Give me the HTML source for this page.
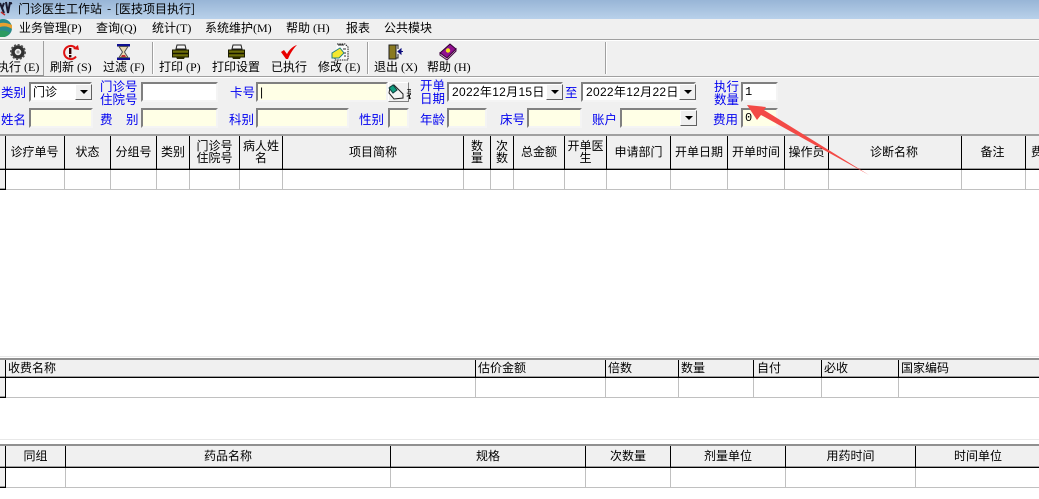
<!DOCTYPE html>
<html><head><meta charset="utf-8">
<style>
html,body{margin:0;padding:0;width:1039px;height:499px;overflow:hidden;background:#fff}
body{position:relative;font:12px/14px "WenQuanYi Zen Hei","Noto Sans CJK SC",sans-serif;color:#000}
div,span{position:absolute;white-space:nowrap}
svg{position:absolute;overflow:visible}
.b{background:#f0f0f0}
.m{top:21px;font-family:"Liberation Serif","WenQuanYi Zen Hei",sans-serif}
.t{top:60px;font-size:12px;line-height:14px;font-family:"Liberation Serif","WenQuanYi Zen Hei",sans-serif}
.sep{top:42px;width:1px;height:32px;background:#a0a0a0;border-right:1px solid #fff}
.l{color:#0000f0;font-size:12.5px;line-height:13px}
.i{box-sizing:border-box;height:20px;border:2px solid;border-color:#808080 #f4f4f4 #f4f4f4 #808080;background:#ffffe6;font:12px/16px "Liberation Sans",sans-serif;padding-left:2px}
.w{background:#fff}
.dd{box-sizing:border-box;width:17px;height:16px;background:#f0f0f0;border:1px solid;border-color:#fff #606060 #606060 #fff}
.dd:after{content:"";position:absolute;left:4px;top:5px;border:4px solid transparent;border-top:4px solid #000;border-bottom:0}
.h{background:#f0f0f0}
.v{width:1px;background:#000}
.g{width:1px;background:#c0c0c0}
.c{text-align:center;line-height:12px}
</style></head><body>
<!-- title -->
<div style="left:0;top:0;width:1039px;height:19px;background:linear-gradient(#98b5d6,#b9d1ea)"></div>
<svg style="left:0;top:0" width="14" height="16"><path d="M0 3L4 13M4 3L2 8M6 2L8 13L10 2M9 4L12 3" stroke="#1a1a30" stroke-width="2" fill="none"/><path d="M1 12L5 15" stroke="#c03030" stroke-width="1.5"/></svg>
<div style="left:18px;top:2px">门诊医生工作站</div>
<div style="left:107px;top:2px">-</div>
<div style="left:115px;top:2px">[医技项目执行]</div>
<!-- menu -->
<div class="b" style="left:0;top:19px;width:1039px;height:20px"></div>
<svg style="left:0;top:19px" width="13" height="19"><circle cx="3" cy="9" r="9" fill="#2a8a8a"/><path d="M-4 6C2 2 8 4 12 6L12 10C8 7 2 6 -4 10Z" fill="#e8a030"/><path d="M-4 13C2 10 7 12 10 14L5 18L-4 18Z" fill="#2c9a60"/></svg>
<div class="m" style="left:19px">业务管理(P)</div>
<div class="m" style="left:96px">查询(Q)</div>
<div class="m" style="left:152px">统计(T)</div>
<div class="m" style="left:205px">系统维护(M)</div>
<div class="m" style="left:286px">帮助 (H)</div>
<div class="m" style="left:346px">报表</div>
<div class="m" style="left:384px">公共模块</div>
<!-- toolbar -->
<div class="b" style="left:0;top:39px;width:1039px;height:96px"></div>
<div style="left:0;top:39px;width:1039px;height:1px;background:#a0a0a0"></div>
<div style="left:0;top:40px;width:1039px;height:1px;background:#fff"></div>
<div style="left:0;top:76px;width:1039px;height:1px;background:#a0a0a0"></div>
<div style="left:0;top:77px;width:1039px;height:1px;background:#fff"></div>
<div style="left:43px;top:41px;width:1px;height:34px;background:#a0a0a0"></div>
<div style="left:0;top:75px;width:44px;height:1px;background:#909090"></div>
<div class="sep" style="left:152px"></div>
<div class="sep" style="left:367px"></div>
<div class="sep" style="left:605px"></div>
<!-- gear -->
<svg style="left:10px;top:44px" width="16" height="16"><circle cx="8" cy="8" r="5" fill="none" stroke="#303030" stroke-width="3.5"/><circle cx="8" cy="8" r="7" fill="none" stroke="#505050" stroke-width="2" stroke-dasharray="2 1.6"/><circle cx="8" cy="8" r="1.6" fill="#a0a0a0"/></svg>
<!-- refresh -->
<svg style="left:62px;top:44px" width="18" height="17"><path d="M14 12.5A6.6 6.6 0 1 1 13 3.5" fill="none" stroke="#e01010" stroke-width="2"/><path d="M11 5L17 6L16 1Z" fill="#e01010"/><rect x="7" y="4" width="2.4" height="6" fill="#300"/><rect x="7" y="11" width="2.4" height="2.4" fill="#300"/></svg>
<!-- hourglass -->
<svg style="left:116px;top:44px" width="15" height="16"><rect x="1" y="0" width="13" height="2.5" fill="#101090"/><rect x="1" y="13.5" width="13" height="2.5" fill="#101090"/><path d="M3 2.5H12L8.5 8L12 13.5H3L6.5 8Z" fill="#e8d8b0" stroke="#505050"/><path d="M6 11H9L10 13H5Z" fill="#c03030"/></svg>
<!-- printers -->
<svg style="left:172px;top:44px" width="17" height="16"><path d="M5 1H13L14 5H4Z" fill="#f4f4f4" stroke="#202020"/><path d="M0.500 6H16.500V13H0.500Z" fill="#6e6e08" stroke="#181800"/><path d="M1 9.500H16" stroke="#181800" stroke-width="1.500"/><path d="M4 13H13L12 15H5Z" fill="#282800"/></svg>
<svg style="left:228px;top:44px" width="17" height="16"><path d="M5 1H13L14 5H4Z" fill="#f4f4f4" stroke="#202020"/><path d="M0.500 6H16.500V13H0.500Z" fill="#6e6e08" stroke="#181800"/><path d="M1 9.500H16" stroke="#181800" stroke-width="1.500"/><path d="M4 13H13L12 15H5Z" fill="#282800"/></svg>
<!-- check -->
<svg style="left:280px;top:44px" width="18" height="16"><path d="M1 8L4 6L7 10C9 6 13 2 17 1C13 5 10 10 8 15H6Z" fill="#e80000"/></svg>
<!-- edit -->
<svg style="left:331px;top:43px" width="18" height="18"><path d="M6 1H14L17 4V17H4V10" fill="#fafafa" stroke="#202020" stroke-dasharray="1.5 .8"/><path d="M1 10L9 5L13 10L8 15H1Z" fill="#f4e830" stroke="#208080"/><path d="M7 2H13M12 6H15M13 10H15M13 13H15" stroke="#303030"/></svg>
<!-- exit -->
<svg style="left:388px;top:44px" width="16" height="16"><path d="M1 1H8V15H1Z" fill="#8a7a20" stroke="#202020"/><path d="M8 1H10V5M10 10V14H8" stroke="#202020" fill="none"/><path d="M10 7.5H15M13 5V10L10 7.5Z" stroke="#101080" fill="#101080"/></svg>
<!-- help -->
<svg style="left:439px;top:43px" width="18" height="18"><path d="M1 10L11 1L17 6L8 15Z" fill="#901090" stroke="#300030"/><path d="M1 10V12L8 17L17 8V6L8 15Z" fill="#f0e8e0" stroke="#400040"/><circle cx="9" cy="7.500" r="2.200" fill="#f0e020"/></svg>
<div class="t" style="left:-3px">执行 (E)</div>
<div class="t" style="left:50px">刷新 (S)</div>
<div class="t" style="left:103px">过滤 (F)</div>
<div class="t" style="left:159px">打印 (P)</div>
<div class="t" style="left:212px">打印设置</div>
<div class="t" style="left:271px">已执行</div>
<div class="t" style="left:318px">修改 (E)</div>
<div class="t" style="left:374px">退出 (X)</div>
<div class="t" style="left:427px">帮助 (H)</div>
<!-- filter labels -->
<div class="l" style="left:1px;top:85px">类别</div>
<div class="l" style="left:100px;top:79px">门诊号<br>住院号</div>
<div class="l" style="left:230px;top:85px">卡号</div>
<div class="l" style="left:420px;top:78px">开单<br>日期</div>
<div class="l" style="left:565px;top:85px">至</div>
<div class="l" style="left:714px;top:79px">执行<br>数量</div>
<div class="l" style="left:1px;top:112px">姓名</div>
<div class="l" style="left:100px;top:112px">费</div>
<div class="l" style="left:126px;top:112px">别</div>
<div class="l" style="left:229px;top:112px">科别</div>
<div class="l" style="left:359px;top:112px">性别</div>
<div class="l" style="left:420px;top:112px">年龄</div>
<div class="l" style="left:500px;top:112px">床号</div>
<div class="l" style="left:592px;top:112px">账户</div>
<div class="l" style="left:713px;top:112px">费用</div>
<!-- row 1 inputs -->
<div class="i w" style="left:29px;top:82px;width:63px;font-family:'WenQuanYi Zen Hei',sans-serif">门诊<div class="dd" style="left:44px;top:0"></div></div>
<div class="i w" style="left:141px;top:82px;width:77px"></div>
<div class="i" style="left:256px;top:82px;width:132px">|</div>
<div style="left:388px;top:82px;width:21px;height:20px;box-sizing:border-box;background:#f0f0f0;border:1px solid;border-color:#fff #808080 #808080 #fff"></div>
<svg style="left:388px;top:84px" width="17" height="17"><path d="M2 3L6 1L15 10L15 14L6 15L1 9Z" fill="#f4f4f4" stroke="#202020"/><path d="M1 4L5 1L9 6L5 9Z" fill="#10a080" stroke="#104040"/></svg>
<div style="left:406px;top:87px;width:5px;height:15px;overflow:hidden;font-size:12px">表</div>
<div class="i w" style="left:447px;top:82px;width:116px;padding-left:3px;letter-spacing:.3px;font-family:'Liberation Sans','WenQuanYi Zen Hei',sans-serif">2022年12月15日<div class="dd" style="left:97px;top:0"></div></div>
<div class="i w" style="left:581px;top:82px;width:115px;padding-left:3px;letter-spacing:.3px;font-family:'Liberation Sans','WenQuanYi Zen Hei',sans-serif">2022年12月22日<div class="dd" style="left:96px;top:0"></div></div>
<div class="i w" style="left:741px;top:82px;width:37px;font-family:'Liberation Mono',monospace">1</div>
<!-- row 2 inputs -->
<div class="i" style="left:29px;top:108px;width:64px"></div>
<div class="i" style="left:141px;top:108px;width:77px"></div>
<div class="i" style="left:256px;top:108px;width:93px"></div>
<div class="i" style="left:388px;top:108px;width:21px"></div>
<div class="i" style="left:447px;top:108px;width:40px"></div>
<div class="i" style="left:527px;top:108px;width:55px"></div>
<div class="i" style="left:620px;top:108px;width:77px"><div class="dd" style="left:58px;top:0"></div></div>
<div class="i" style="left:741px;top:108px;width:37px;font-family:'Liberation Mono',monospace">0</div>

<!-- grid 1 -->
<div style="left:0;top:134px;width:1039px;height:2px;background:#a0a0a0"></div>
<div class="h" style="left:0;top:136px;width:1039px;height:33px"></div>
<div style="left:0;top:168px;width:1039px;height:1px;background:#a0a0a0"></div>
<div style="left:0;top:169px;width:1039px;height:1px;background:#000"></div>
<div class="h" style="left:0;top:170px;width:5px;height:18px;border-bottom:1px solid #a0a0a0"></div>
<div style="left:0;top:189px;width:6px;height:1px;background:#000"></div>
<div style="left:6px;top:189px;width:1033px;height:1px;background:#c0c0c0"></div>
<div class="v" style="left:5px;top:136px;height:54px"></div>
<div class="v" style="left:64px;top:136px;height:34px"></div><div class="g" style="left:64px;top:170px;height:19px"></div>
<div class="v" style="left:110px;top:136px;height:34px"></div><div class="g" style="left:110px;top:170px;height:19px"></div>
<div class="v" style="left:156px;top:136px;height:34px"></div><div class="g" style="left:156px;top:170px;height:19px"></div>
<div class="v" style="left:189px;top:136px;height:34px"></div><div class="g" style="left:189px;top:170px;height:19px"></div>
<div class="v" style="left:239px;top:136px;height:34px"></div><div class="g" style="left:239px;top:170px;height:19px"></div>
<div class="v" style="left:282px;top:136px;height:34px"></div><div class="g" style="left:282px;top:170px;height:19px"></div>
<div class="v" style="left:463px;top:136px;height:34px"></div><div class="g" style="left:463px;top:170px;height:19px"></div>
<div class="v" style="left:490px;top:136px;height:34px"></div><div class="g" style="left:490px;top:170px;height:19px"></div>
<div class="v" style="left:513px;top:136px;height:34px"></div><div class="g" style="left:513px;top:170px;height:19px"></div>
<div class="v" style="left:564px;top:136px;height:34px"></div><div class="g" style="left:564px;top:170px;height:19px"></div>
<div class="v" style="left:606px;top:136px;height:34px"></div><div class="g" style="left:606px;top:170px;height:19px"></div>
<div class="v" style="left:670px;top:136px;height:34px"></div><div class="g" style="left:670px;top:170px;height:19px"></div>
<div class="v" style="left:727px;top:136px;height:34px"></div><div class="g" style="left:727px;top:170px;height:19px"></div>
<div class="v" style="left:784px;top:136px;height:34px"></div><div class="g" style="left:784px;top:170px;height:19px"></div>
<div class="v" style="left:828px;top:136px;height:34px"></div><div class="g" style="left:828px;top:170px;height:19px"></div>
<div class="v" style="left:961px;top:136px;height:34px"></div><div class="g" style="left:961px;top:170px;height:19px"></div>
<div class="v" style="left:1025px;top:136px;height:34px"></div><div class="g" style="left:1025px;top:170px;height:19px"></div>
<div class="c" style="left:5px;top:146px;width:59px">诊疗单号</div>
<div class="c" style="left:65px;top:146px;width:45px">状态</div>
<div class="c" style="left:111px;top:146px;width:45px">分组号</div>
<div class="c" style="left:157px;top:146px;width:32px">类别</div>
<div class="c" style="left:190px;top:140px;width:49px">门诊号<br>住院号</div>
<div class="c" style="left:240px;top:140px;width:42px;white-space:normal">病人姓<br>名</div>
<div class="c" style="left:283px;top:146px;width:180px">项目简称</div>
<div class="c" style="left:464px;top:140px;width:26px">数<br>量</div>
<div class="c" style="left:491px;top:140px;width:22px">次<br>数</div>
<div class="c" style="left:514px;top:146px;width:50px">总金额</div>
<div class="c" style="left:565px;top:140px;width:41px">开单医<br>生</div>
<div class="c" style="left:607px;top:146px;width:63px">申请部门</div>
<div class="c" style="left:671px;top:146px;width:56px">开单日期</div>
<div class="c" style="left:728px;top:146px;width:56px">开单时间</div>
<div class="c" style="left:785px;top:146px;width:43px">操作员</div>
<div class="c" style="left:828px;top:146px;width:132px">诊断名称</div>
<div class="c" style="left:961px;top:146px;width:63px">备注</div>
<div style="left:1031px;top:146px;line-height:12px">费</div>

<!-- grid 2 -->
<div style="left:0;top:356px;width:1039px;height:1px;background:#e8e8e8"></div>
<div style="left:0;top:358px;width:1039px;height:2px;background:#909090"></div>
<div class="h" style="left:0;top:360px;width:1039px;height:16px"></div>
<div style="left:0;top:376px;width:1039px;height:1px;background:#a0a0a0"></div>
<div style="left:0;top:377px;width:1039px;height:1px;background:#000"></div>
<div class="h" style="left:0;top:378px;width:5px;height:18px;border-bottom:1px solid #a0a0a0"></div>
<div style="left:0;top:397px;width:6px;height:1px;background:#000"></div>
<div style="left:6px;top:397px;width:1033px;height:1px;background:#c0c0c0"></div>
<div class="v" style="left:5px;top:360px;height:38px"></div>
<div class="v" style="left:475px;top:360px;height:18px"></div><div class="g" style="left:475px;top:378px;height:19px"></div>
<div class="v" style="left:605px;top:360px;height:18px"></div><div class="g" style="left:605px;top:378px;height:19px"></div>
<div class="v" style="left:678px;top:360px;height:18px"></div><div class="g" style="left:678px;top:378px;height:19px"></div>
<div class="v" style="left:753px;top:360px;height:18px"></div><div class="g" style="left:753px;top:378px;height:19px"></div>
<div class="v" style="left:821px;top:360px;height:18px"></div><div class="g" style="left:821px;top:378px;height:19px"></div>
<div class="v" style="left:898px;top:360px;height:18px"></div><div class="g" style="left:898px;top:378px;height:19px"></div>
<div style="left:8px;top:361px">收费名称</div>
<div style="left:478px;top:361px">估价金额</div>
<div style="left:608px;top:361px">倍数</div>
<div style="left:681px;top:361px">数量</div>
<div style="left:757px;top:361px">自付</div>
<div style="left:824px;top:361px">必收</div>
<div style="left:901px;top:361px">国家编码</div>

<!-- grid 3 -->
<div style="left:0;top:439px;width:1039px;height:1px;background:#e8e8e8"></div>
<div style="left:0;top:444px;width:1039px;height:2px;background:#909090"></div>
<div class="h" style="left:0;top:446px;width:1039px;height:20px"></div>
<div style="left:0;top:466px;width:1039px;height:1px;background:#a0a0a0"></div>
<div style="left:0;top:467px;width:1039px;height:1px;background:#000"></div>
<div class="h" style="left:0;top:468px;width:5px;height:18px;border-bottom:1px solid #a0a0a0"></div>
<div style="left:0;top:487px;width:6px;height:1px;background:#000"></div>
<div style="left:6px;top:487px;width:1033px;height:1px;background:#c0c0c0"></div>
<div class="v" style="left:5px;top:446px;height:42px"></div>
<div class="v" style="left:65px;top:446px;height:22px"></div><div class="g" style="left:65px;top:468px;height:19px"></div>
<div class="v" style="left:390px;top:446px;height:22px"></div><div class="g" style="left:390px;top:468px;height:19px"></div>
<div class="v" style="left:585px;top:446px;height:22px"></div><div class="g" style="left:585px;top:468px;height:19px"></div>
<div class="v" style="left:670px;top:446px;height:22px"></div><div class="g" style="left:670px;top:468px;height:19px"></div>
<div class="v" style="left:785px;top:446px;height:22px"></div><div class="g" style="left:785px;top:468px;height:19px"></div>
<div class="v" style="left:915px;top:446px;height:22px"></div><div class="g" style="left:915px;top:468px;height:19px"></div>
<div class="c" style="left:6px;top:450px;width:59px">同组</div>
<div class="c" style="left:66px;top:450px;width:324px">药品名称</div>
<div class="c" style="left:391px;top:450px;width:194px">规格</div>
<div class="c" style="left:586px;top:450px;width:84px">次数量</div>
<div class="c" style="left:671px;top:450px;width:114px">剂量单位</div>
<div class="c" style="left:786px;top:450px;width:129px">用药时间</div>
<div class="c" style="left:916px;top:450px;width:124px">时间单位</div>

<!-- arrow -->
<svg style="left:0;top:0" width="1039" height="499"><polygon points="747,105 766,107 764,110 869,175 761,115 757,120" fill="#f34a46"/></svg>
</body></html>
